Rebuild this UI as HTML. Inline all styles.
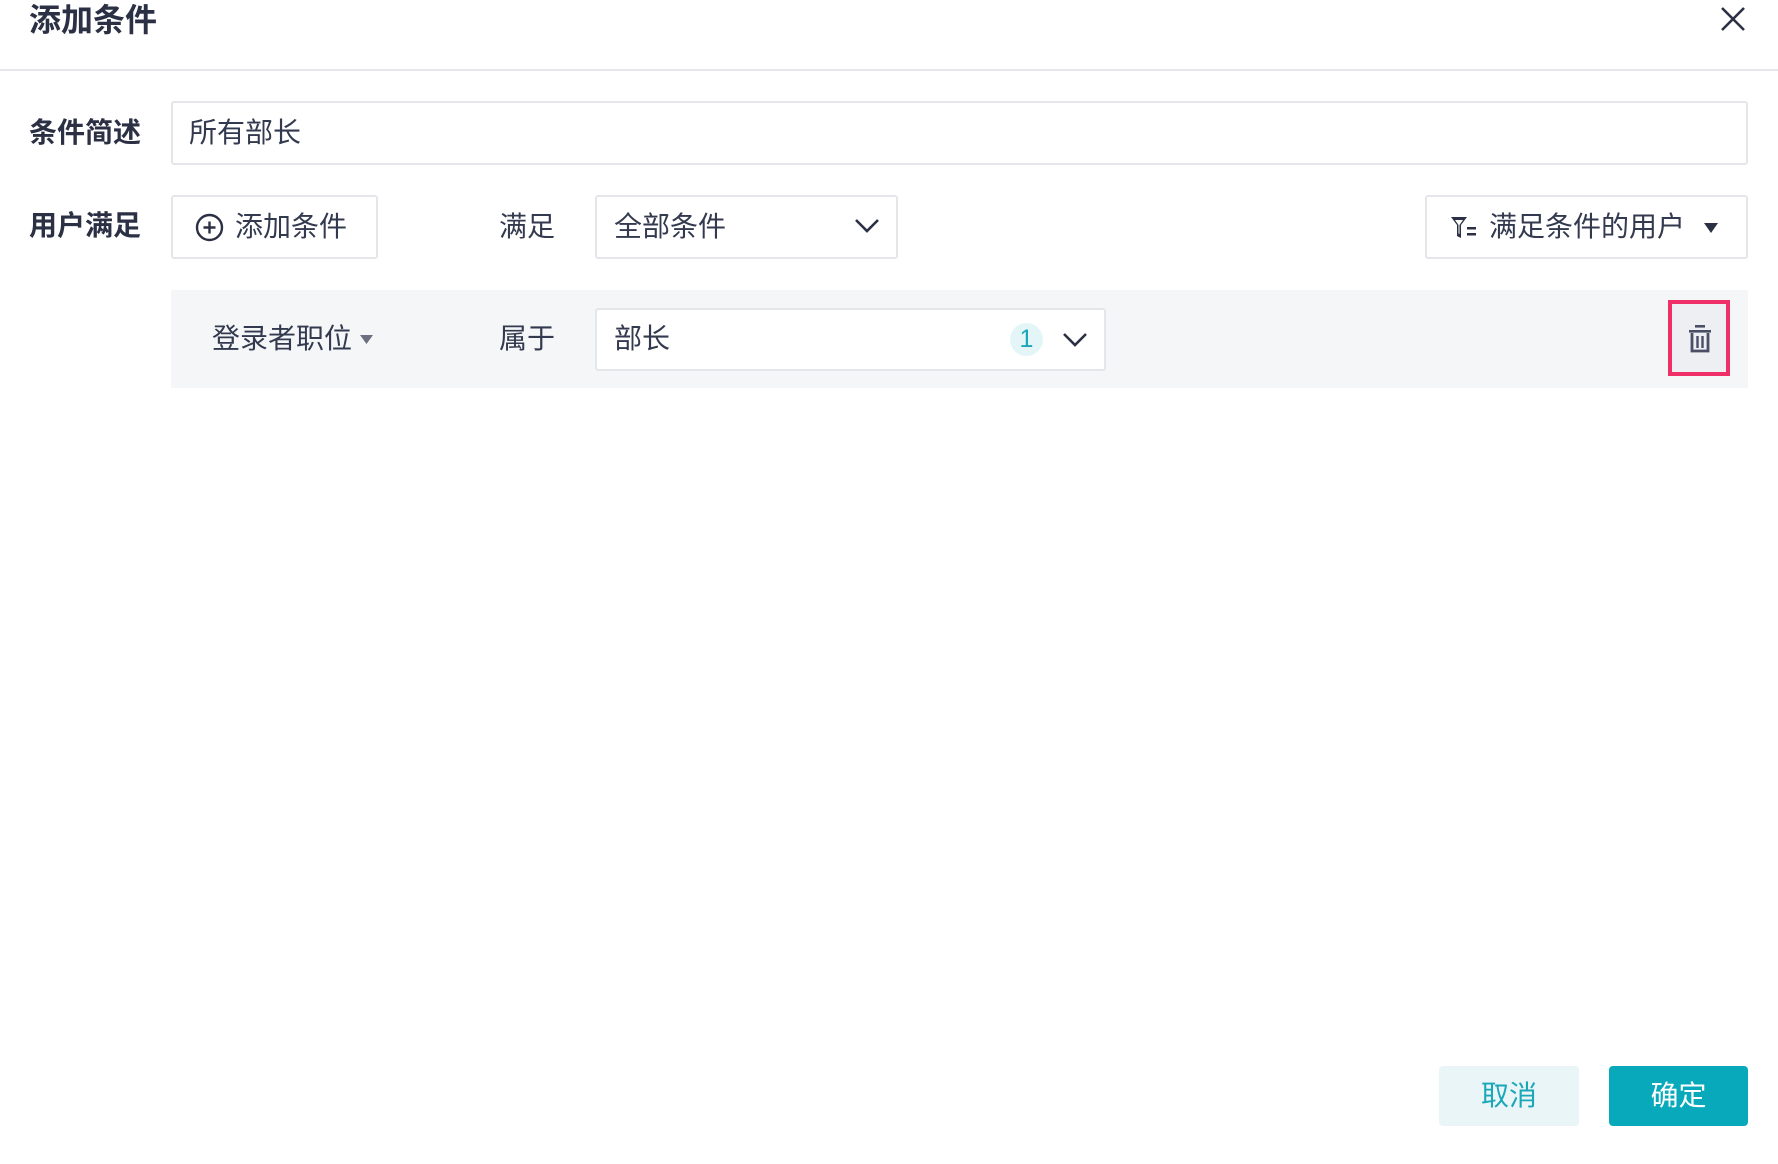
<!DOCTYPE html>
<html><head><meta charset="utf-8"><style>
*{box-sizing:border-box;margin:0;padding:0}
body{width:1778px;height:1164px;background:#fff;font-family:"Liberation Sans","Noto Sans CJK SC",sans-serif;color:#333a4f;position:relative;overflow:hidden;font-size:28px}
.a{position:absolute}
.title{left:29px;top:0px;font-size:32px;font-weight:bold;color:#2b3044;line-height:40px}
.hline{left:0;top:69px;width:1778px;height:2px;background:#e6e7ec}
.lbl{font-weight:bold;color:#2b3044;line-height:30px}
.box{border:2px solid #e4e6ea;border-radius:3px;background:#fff}
.t{line-height:30px;white-space:nowrap}
</style></head><body>
<div class="a title">添加条件</div>
<svg class="a" style="left:1720px;top:6px" width="26" height="26" viewBox="0 0 26 26"><path d="M2 2L24 24M24 2L2 24" stroke="#2b3044" stroke-width="2.6" fill="none"/></svg>
<div class="a hline"></div>

<div class="a lbl" style="left:29px;top:118px">条件简述</div>
<div class="a box" style="left:171px;top:101px;width:1577px;height:64px"></div>
<div class="a t" style="left:189px;top:118px">所有部长</div>

<div class="a lbl" style="left:29px;top:211px">用户满足</div>
<div class="a box" style="left:171px;top:195px;width:207px;height:64px"></div>
<svg class="a" style="left:195px;top:213px" width="29" height="29" viewBox="0 0 29 29"><circle cx="14.5" cy="14.5" r="12.5" stroke="#2b3044" stroke-width="2.4" fill="none"/><path d="M14.5 8.5v12M8.5 14.5h12" stroke="#2b3044" stroke-width="2.4"/></svg>
<div class="a t" style="left:235px;top:212px">添加条件</div>
<div class="a t" style="left:499px;top:212px">满足</div>
<div class="a box" style="left:595px;top:195px;width:303px;height:64px"></div>
<div class="a t" style="left:614px;top:212px">全部条件</div>
<svg class="a" style="left:854px;top:218px" width="26" height="16" viewBox="0 0 26 16"><path d="M2 2l11 11L24 2" stroke="#2b3044" stroke-width="2.6" fill="none"/></svg>

<div class="a box" style="left:1425px;top:195px;width:323px;height:64px"></div>
<svg class="a" style="left:1450px;top:216px" width="27" height="24" viewBox="0 0 27 24"><path d="M1 1h16l-6 8v13l-4-2V9z" fill="#2b3044"/><path d="M5 4h8l-3.5 5v9l-1-.5V9z" fill="#fff"/><rect x="17" y="11" width="9" height="2.5" fill="#2b3044"/><rect x="17" y="17" width="9" height="2.5" fill="#2b3044"/></svg>
<div class="a t" style="left:1489px;top:212px">满足条件的用户</div>
<svg class="a" style="left:1703px;top:222px" width="16" height="12" viewBox="0 0 16 12"><path d="M1 1h14L8 11z" fill="#2b3044"/></svg>

<div class="a" style="left:171px;top:290px;width:1577px;height:98px;background:#f5f6f8"></div>
<div class="a t" style="left:212px;top:324px">登录者职位</div>
<svg class="a" style="left:359px;top:334px" width="15" height="11" viewBox="0 0 15 11"><path d="M1 1h13L7.5 10z" fill="#6b7080"/></svg>
<div class="a t" style="left:499px;top:324px">属于</div>
<div class="a box" style="left:595px;top:308px;width:511px;height:63px"></div>
<div class="a t" style="left:614px;top:324px">部长</div>
<div class="a" style="left:1010px;top:323px;width:33px;height:33px;border-radius:50%;background:#e3f5f7;color:#1aa7b8;text-align:center;line-height:33px;font-size:25px">1</div>
<svg class="a" style="left:1062px;top:332px" width="26" height="16" viewBox="0 0 26 16"><path d="M2 2l11 11L24 2" stroke="#2b3044" stroke-width="2.6" fill="none"/></svg>

<div class="a" style="left:1668px;top:300px;width:62px;height:76px;border:4px solid #ef2f67;background:#eeeff3"></div>
<svg class="a" style="left:1687px;top:324px" width="26" height="30" viewBox="0 0 26 30"><rect x="8" y="1" width="10" height="2.6" fill="#4a4f66"/><rect x="2" y="6" width="22" height="2.6" fill="#4a4f66"/><path d="M5 9v18h16V9" stroke="#4a4f66" stroke-width="2.8" fill="none"/><path d="M10.5 12v12M15.5 12v12" stroke="#4a4f66" stroke-width="2.4"/></svg>

<div class="a" style="left:1439px;top:1066px;width:140px;height:60px;background:#eaf5f8;border-radius:4px;color:#1aa7b8;text-align:center;line-height:60px;font-size:28px">取消</div>
<div class="a" style="left:1609px;top:1066px;width:139px;height:60px;background:#07a9bb;border-radius:4px;color:#fff;text-align:center;line-height:60px;font-size:28px">确定</div>
</body></html>
